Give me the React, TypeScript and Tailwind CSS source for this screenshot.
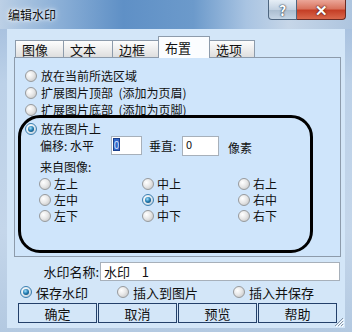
function Radio({ checked = false }: { checked?: boolean }) {
  return (
    <span
      className={
        checked
          ? 'flex h-[12px] w-[12px] shrink-0 items-center justify-center rounded-full border border-[#3b7fb0] bg-[radial-gradient(circle_at_35%_35%,#ffffff_0%,#dfe9f1_50%,#a8bccb_100%)]'
          : 'flex h-[12px] w-[12px] shrink-0 items-center justify-center rounded-full border border-[#979a9d] bg-[radial-gradient(circle_at_35%_35%,#ffffff_0%,#e8e8e8_45%,#bdbdbd_100%)]'
      }
    >
      {checked && (
        <span className="h-[6px] w-[6px] rounded-full bg-[radial-gradient(circle_at_40%_35%,#9fe0ff_0%,#1f78ad_50%,#0b3a5e_100%)]" />
      )}
    </span>
  )
}

function Option({ label, checked = false }: { label: string; checked?: boolean }) {
  return (
    <div className="flex h-[17px] items-center gap-[4px] whitespace-pre">
      <Radio checked={checked} />
      <span>{label}</span>
    </div>
  )
}

function Cell({ label, checked = false }: { label: string; checked?: boolean }) {
  return (
    <div className="flex h-[16px] items-center gap-[3px] whitespace-nowrap">
      <Radio checked={checked} />
      <span>{label}</span>
    </div>
  )
}

const tabs = [
  { name: '图像', w: 'w-[49px]' },
  { name: '文本', w: 'w-[50px]' },
  { name: '边框', w: 'w-[47px]' },
  { name: '布置', w: 'w-[52px]', active: true },
  { name: '选项', w: 'w-[46px]' },
]

export default function App() {
  return (
    <div className="relative flex h-[332px] w-[352px] flex-col overflow-hidden bg-[linear-gradient(180deg,#9fbadb_0%,#bcd1e8_25%,#c4d6ea_70%,#b3c9e1_100%)] font-['Noto_Sans_CJK_SC','Noto_Sans',sans-serif] text-[12px] leading-none text-[#111]">
      {/* title bar */}
      <div className="flex h-[29px] bg-[linear-gradient(90deg,#bcd0e6_0%,#8fb2d8_15%,#5f90c6_35%,#6c9acb_55%,#a9c4e2_70%,#c6d6e8_82%,#aec5df_100%)]">
        <span className="mt-[9px] ml-[8px] text-[12px] [text-shadow:0_0_6px_#ffffff,0_0_3px_#ffffff]">编辑水印</span>
        <div className="mr-[6px] ml-auto flex h-[20px] self-start">
          <div className="flex w-[29px] items-center justify-center rounded-bl-[4px] border border-t-0 border-[#4e6680] bg-[linear-gradient(180deg,#e6eef6_0%,#c3d2e2_50%,#a9bccf_51%,#c5d5e5_100%)] text-[14px] font-bold text-white [text-shadow:0_0_2px_#203040,0_0_1px_#203040]">
            ?
          </div>
          <div className="flex w-[49px] items-center justify-center rounded-br-[4px] border border-t-0 border-l-0 border-[#6b2b23] bg-[linear-gradient(180deg,#eba698_0%,#d9745f_45%,#c53f26_55%,#d9684c_100%)] text-[15px] font-bold text-white [text-shadow:0_0_2px_#4a1008,0_0_1px_#4a1008]">
            ✕
          </div>
        </div>
      </div>

      {/* client area */}
      <div className="mx-[7px] flex h-[299px] flex-col bg-[#d3e6f8]">
        {/* tab strip */}
        <div className="mt-[7px] flex h-[21px] items-end pl-[8px]">
          {tabs.map((t, i) =>
            t.active ? (
              <div
                key={t.name}
                className={`${t.w} relative z-10 -mb-px -ml-px flex h-[22px] border border-b-0 border-[#8d9bab] bg-[#fbfdff] pt-[4px] pl-[6px] text-[13px]`}
              >
                {t.name}
              </div>
            ) : (
              <div
                key={t.name}
                className={`${t.w} ${i === 0 ? '' : '-ml-px'} flex h-[17px] border border-b-0 border-[#8d9bab] bg-[linear-gradient(180deg,#fdfdfd_0%,#eeeeee_50%,#dedede_100%)] pt-[2px] pl-[6px] text-[13px]`}
              >
                {t.name}
              </div>
            ),
          )}
        </div>

        {/* tab panel */}
        <div className="ml-[7px] h-[200px] w-[327px] border border-[#8d9bab] bg-[#cfe5fb]">
          <div className="pt-[9px] pl-[10px]">
            <Option label="放在当前所选区域" />
            <Option label="扩展图片顶部  (添加为页眉)" />
            <Option label="扩展图片底部  (添加为页脚)" />
          </div>

          <div className="relative -mt-[3px] ml-[3px] h-[138px] w-[295px] rounded-[22px] border-[3px] border-black">
            <div className="mt-[3px] flex h-[15px] items-center gap-[4px] pl-[4px]">
              <Radio checked />
              <span>放在图片上</span>
            </div>

            <div className="flex h-[19px] items-center pl-[19px]">
              <span className="w-[71px]">偏移: 水平</span>
              <div className="flex h-[19px] w-[31px] items-start border border-[#a7b0ba] bg-white pt-[2px] pl-[2px]">
                <span className="flex h-[11px] w-[5px] items-center justify-center bg-[#3569c9] text-[10px] text-[#cfe0ff] outline outline-[#1b3f8c]">
                  0
                </span>
              </div>
              <span className="ml-[7px] w-[33px]">垂直:</span>
              <div className="flex h-[20px] w-[37px] items-start border border-[#a7b0ba] bg-white pt-[2px] pl-[3px] text-[11px]">
                0
              </div>
              <span className="mt-[4px] ml-[9px]">像素</span>
            </div>

            <div className="mt-[4px] flex h-[16px] items-center pl-[19px]">来自图像:</div>

            <div className="mt-[1px] grid grid-cols-[103px_96px_auto] pl-[18px]">
              <Cell label="左上" />
              <Cell label="中上" />
              <Cell label="右上" />
              <Cell label="左中" />
              <Cell label="中" checked />
              <Cell label="右中" />
              <Cell label="左下" />
              <Cell label="中下" />
              <Cell label="右下" />
            </div>
          </div>
        </div>

        {/* name row */}
        <div className="mt-[5px] flex h-[19px] items-center">
          <span className="w-[93px] pr-[1px] text-right text-[13px]">水印名称:</span>
          <div className="flex h-[19px] w-[240px] items-center border border-[#a7b0ba] bg-white pl-[3px] text-[13px] whitespace-pre">
            {'水印    1'}
          </div>
        </div>

        {/* save mode */}
        <div className="mt-[3px] flex h-[16px] items-center pl-[13px] text-[13px]">
          <div className="flex w-[97px] items-center gap-[4px]">
            <Radio checked />
            <span>保存水印</span>
          </div>
          <div className="flex w-[116px] items-center gap-[4px]">
            <Radio />
            <span>插入到图片</span>
          </div>
          <div className="flex items-center gap-[4px]">
            <Radio />
            <span>插入并保存</span>
          </div>
        </div>

        {/* buttons */}
        <div className="mt-[3px] flex h-[20px] gap-[1px] pl-[11px] text-[13px]">
          {['确定', '取消', '预览', '帮助'].map((b) => (
            <div
              key={b}
              className="flex w-[79px] items-center justify-center border border-[#23406a] bg-[#d3e6f8]"
            >
              {b}
            </div>
          ))}
        </div>
      </div>

      {/* size grip */}
      <svg className="absolute right-[8px] bottom-[5px]" width="10" height="10" viewBox="0 0 10 10">
        <path d="M9 1 L1 9 M9 4 L4 9 M9 7 L7 9" stroke="#8795a6" strokeWidth="1" />
        <path d="M10 2 L2 10 M10 5 L5 10 M10 8 L8 10" stroke="#ffffff" strokeWidth="1" />
      </svg>
    </div>
  )
}
